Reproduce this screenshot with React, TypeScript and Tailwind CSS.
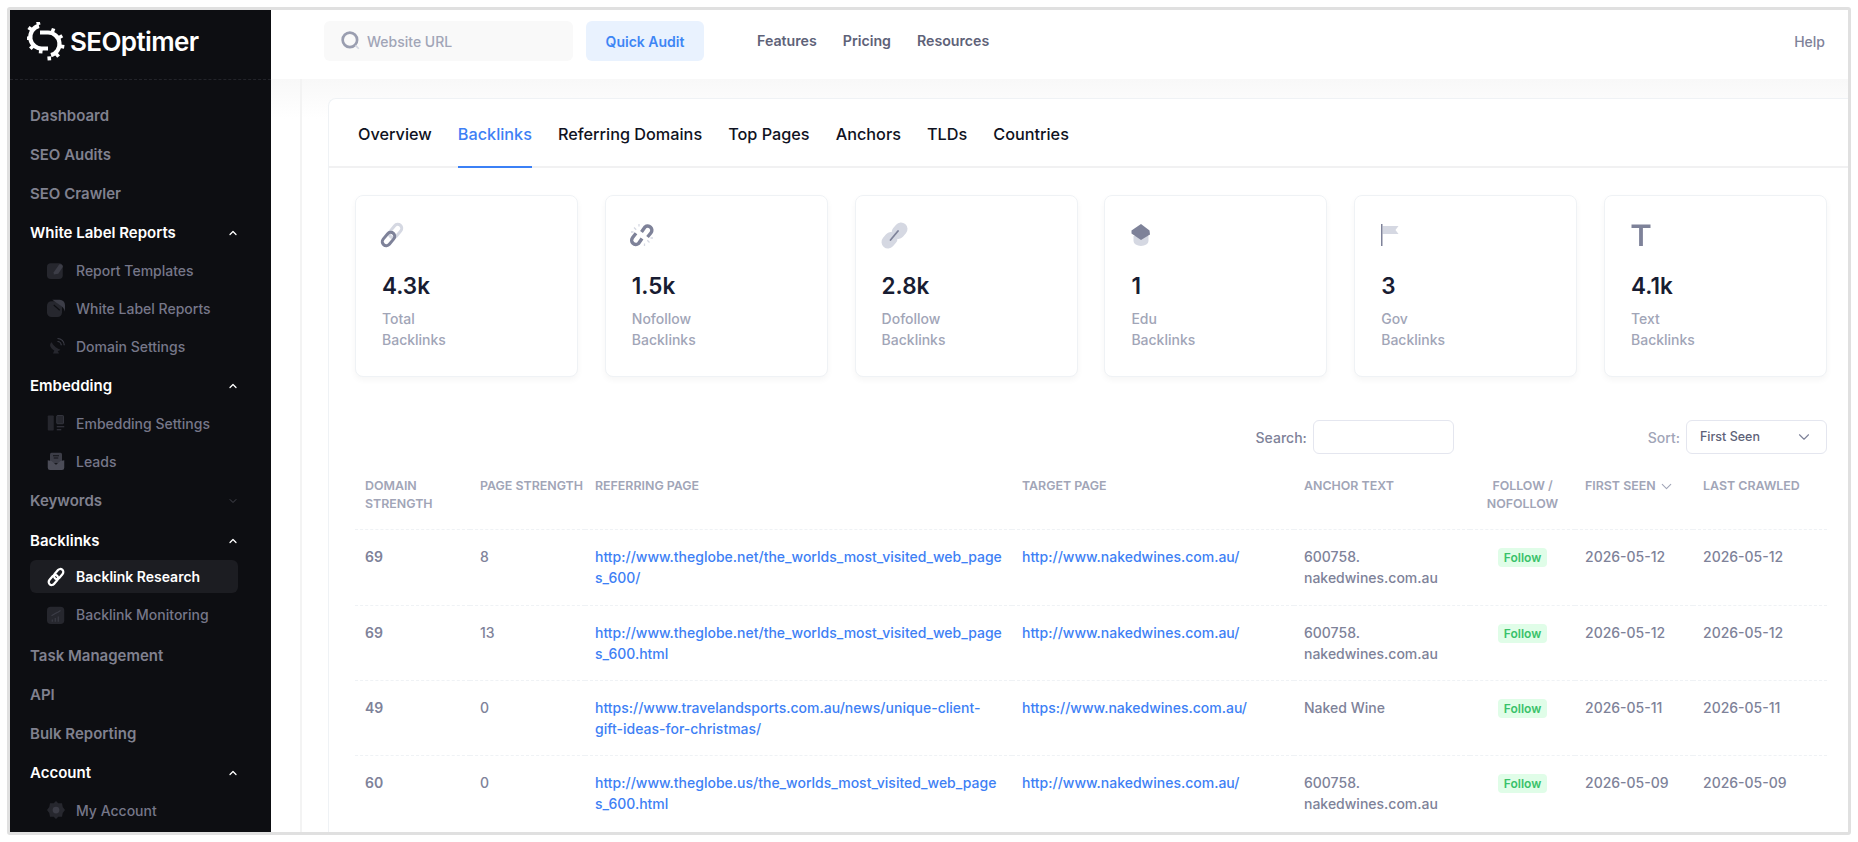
import { ChevronDown, ChevronUp } from 'lucide-react';
import type { ReactNode } from 'react';

const Teeth = ({ cx, cy, r, angles }: { cx: number; cy: number; r: number; angles: number[] }) => (
  <>
    {angles.map((a) => (
      <rect key={a} x={cx + r + 1} y={cy - 1.8} width="4" height="3.6" fill="#fff" transform={`rotate(${a} ${cx} ${cy})`} />
    ))}
  </>
);

const Logo = () => (
  <svg width="38" height="40" viewBox="0 0 38 40" fill="none" className="shrink-0">
    <path d="M12 3.900A11.500 11.500 0 0 0 16 26.500H21" stroke="#fff" strokeWidth="4.200" />
    <path d="M13 10.500H21A11.500 11.500 0 0 1 24 33.100" stroke="#fff" strokeWidth="4.200" />
    <Teeth cx={15} cy={15} r={11.5} angles={[255, 215, 175, 135, 95]} />
    <Teeth cx={21} cy={22} r={11.5} angles={[-70, -30, 10, 50, 85]} />
  </svg>
);

// duotone icons, 24 box. a = strong tone, b = soft tone
type Tone = { a: string; b: string };

const LinkIcon = ({ a, b }: Tone) => (
  <>
    <rect x="11.500" y="0.500" width="8" height="15" rx="4" transform="rotate(40 15.500 8)" stroke={b} strokeWidth="3" fill="none" />
    <rect x="4.500" y="8.500" width="8" height="15" rx="4" transform="rotate(40 8.500 16)" stroke={a} strokeWidth="3" fill="none" />
  </>
);
const BrokenLinkIcon = ({ a, b }: Tone) => (
  <>
    <path d="M11.500 9L15 4a4.200 4.200 0 0 1 6 5.800l-3.500 4.200" stroke={a} strokeWidth="3.400" fill="none" />
    <path d="M12 15.500L8.500 20.500a4.200 4.200 0 0 1-6-5.800l3.500-4.500" stroke={a} strokeWidth="3.400" fill="none" />
    <path d="M4 4.500l2.200 2.200M9 1v2.500M1 9h2.500M19.500 19.500l-2.200-2.200M14.500 23v-2.500M23 15h-2.500" stroke={b} strokeWidth="1.300" />
  </>
);
const DofollowIcon = ({ a, b }: Tone) => (
  <>
    <line x1="8" y1="19" x2="11" y2="15.500" stroke={b} strokeWidth="13" strokeLinecap="round" />
    <line x1="18" y1="9.500" x2="21" y2="6" stroke={b} strokeWidth="13" strokeLinecap="round" />
    <line x1="10.500" y1="17" x2="18" y2="8" stroke={a} strokeWidth="1.800" strokeLinecap="round" />
  </>
);
const EduIcon = ({ a, b }: Tone) => (
  <>
    <path d="M4.500 13h15v5a7.500 5 0 0 1-15 0z" fill={b} />
    <path d="M12 1l8.500 6.500 .5 4-9 5.500-9.500-6.500V7.500z" fill={a} strokeLinejoin="round" />
  </>
);
const FlagIcon = ({ a, b }: Tone) => (
  <>
    <path d="M3.500 3h16l-3 4 3 4h-16z" fill={b} />
    <rect x="2" y="1" width="1.500" height="22" fill={a} />
  </>
);
const TextIcon = ({ a }: Tone) => (
  <path d="M2.500 1.500h19v3.500h-7.600v18h-3.800V5H2.500z" fill={a} />
);

const Icon = ({ children, size = 24, className = '' }: { children: ReactNode; size?: number; className?: string }) => (
  <svg width={size} height={size} viewBox="0 0 24 24" className={`shrink-0 overflow-visible ${className}`}>
    {children}
  </svg>
);

const side = { a: '#3c3d47', b: '#26272e' };

const navIcons: Record<string, ReactNode> = {
  template: (
    <>
      <rect x="0" y="3" width="21" height="21" rx="5" fill={side.b} />
      <path d="M9 15l7-10c2-2 6 1 5 3l-6 9-6 1z" fill={side.a} />
    </>
  ),
  report: (
    <>
      <rect x="0" y="3" width="20" height="21" rx="6" fill={side.b} />
      <path d="M7 1h10a7 7 0 0 1 7 7v9a14 14 0 0 0-7-9z" fill={side.a} />
      <path d="M9 8l8 7" stroke="#0d0e12" strokeWidth="1.500" />
    </>
  ),
  domain: (
    <>
      <path d="M6 7c3 5 8 9 12 10-3 3-8 2-11-1s-4-6-1-9z" fill={side.b} />
      <path d="M8 22l3-7 3 3 2 4z" fill={side.b} />
      <path d="M14 6a5 5 0 0 1 5 5M14 2a9 9 0 0 1 9 9" stroke={side.a} strokeWidth="1.500" fill="none" />
    </>
  ),
  embed: (
    <>
      <rect x="1" y="2" width="8" height="20" rx="1" fill={side.b} />
      <rect x="13" y="2" width="9" height="11" rx="1" fill={side.b} stroke={side.a} />
      <path d="M13 17h10M13 21h6" stroke={side.a} strokeWidth="1.500" />
    </>
  ),
  leads: (
    <>
      <rect x="4" y="1" width="16" height="14" rx="2" fill={side.a} />
      <path d="M1 11l5 1 6 5 6-5 5-1v10a3 3 0 0 1-3 3H4a3 3 0 0 1-3-3z" fill="#4b4c57" />
      <path d="M8 5h8M9 8h6" stroke="#0d0e12" strokeWidth="1.200" />
    </>
  ),
  monitor: (
    <>
      <rect x="0" y="1" width="23" height="23" rx="5" fill={side.b} />
      <path d="M6 13l5-3 4-2 3-2" stroke={side.a} strokeWidth="1.500" fill="none" />
      <path d="M7 21v-3M11 21v-5M15 21v-7" stroke={side.a} strokeWidth="1.500" />
    </>
  ),
  account: (
    <>
      <path d="M12 0l3 3h5l1 5 3 4-3 4-1 5h-5l-3 3-3-3H4l-1-5-3-4 3-4 1-5h5z" fill={side.b} />
      <circle cx="12" cy="12" r="4.500" fill={side.a} />
    </>
  ),
};

const Top = ({ label, open, chevron, className = '' }: { label: string; open?: boolean; chevron?: boolean; className?: string }) => (
  <div className={`flex h-[39px] items-center justify-between pr-[32px] pl-[20px] text-[15px] font-semibold ${open ? 'text-white' : 'text-[#80818f]'} ${className}`}>
    <span>{label}</span>
    {chevron &&
      (open ? (
        <ChevronUp size={12} strokeWidth={2.500} className="text-white" />
      ) : (
        <ChevronDown size={12} strokeWidth={2} className="text-[#45464f]" />
      ))}
  </div>
);

const Sub = ({ label, icon, active }: { label: string; icon: ReactNode; active?: boolean }) => (
  <div className="flex h-[38px] items-center pr-[33px] pl-[20px]">
    <div className={`flex h-[33px] w-full items-center gap-[11px] rounded-md pl-[17px] text-[14px] ${active ? 'bg-[#1c1d22] font-semibold text-white' : 'font-medium text-[#767789]'}`}>
      <Icon size={18}>{icon}</Icon>
      <span className="whitespace-nowrap">{label}</span>
    </div>
  </div>
);

const SubGroup = ({ children, className = '-mt-[1.500px] mb-[1.500px]' }: { children: ReactNode; className?: string }) => (
  <div className={className}>{children}</div>
);

const Sidebar = () => (
  <aside className="flex h-full w-[261px] shrink-0 flex-col bg-[#0d0e12]">
    <div className="flex h-[70px] shrink-0 items-center gap-[5px] border-b border-dashed border-[#23242a] pb-[6px] pl-[17px]">
      <Logo />
      <span className="text-[26px] font-semibold tracking-[-0.6px] text-white">SEOptimer</span>
    </div>
    <nav className="pt-[16.500px]">
      <Top label="Dashboard" />
      <Top label="SEO Audits" />
      <Top label="SEO Crawler" />
      <Top label="White Label Reports" open chevron />
      <SubGroup>
        <Sub label="Report Templates" icon={navIcons.template} />
        <Sub label="White Label Reports" icon={navIcons.report} />
        <Sub label="Domain Settings" icon={navIcons.domain} />
      </SubGroup>
      <Top label="Embedding" open chevron />
      <SubGroup>
        <Sub label="Embedding Settings" icon={navIcons.embed} />
        <Sub label="Leads" icon={navIcons.leads} />
      </SubGroup>
      <Top label="Keywords" chevron />
      <Top label="Backlinks" open chevron className="mt-[1px]" />
      <SubGroup className="-mt-[3px] mb-[3px]">
        <Sub label="Backlink Research" icon={<LinkIcon a="#fff" b="#fff" />} active />
        <Sub label="Backlink Monitoring" icon={navIcons.monitor} />
      </SubGroup>
      <Top label="Task Management" />
      <Top label="API" />
      <Top label="Bulk Reporting" />
      <Top label="Account" open chevron />
      <SubGroup>
        <Sub label="My Account" icon={navIcons.account} />
      </SubGroup>
    </nav>
  </aside>
);

const Header = () => (
  <header className="flex h-[69px] shrink-0 items-center bg-white pr-[23px] pb-[7px] pl-[53px] text-[14px]">
    <div className="flex h-10 w-[249px] items-center gap-[6px] rounded-md bg-[#f9f9f9] pl-[17px] font-medium text-[#a1a5b7]">
      <svg width="20" height="20" viewBox="0 0 18 18" fill="none" className="shrink-0">
        <circle cx="8" cy="8" r="6.500" stroke="#9a9eb0" strokeWidth="2.400" />
        <path d="M13 13l3 3" stroke="#d5d8e2" strokeWidth="1.500" />
      </svg>
      Website URL
    </div>
    <div className="ml-[13px] flex h-10 w-[118px] items-center justify-center rounded-md bg-[#e9f2fe] font-semibold text-[#3e86f5]">
      Quick Audit
    </div>
    <div className="ml-[53px] flex gap-[26px] text-[14.200px] font-semibold text-[#5e6278]">
      <span>Features</span>
      <span>Pricing</span>
      <span>Resources</span>
    </div>
    <span className="ml-auto font-medium text-[#7e8299]">Help</span>
  </header>
);

const tabs = ['Overview', 'Backlinks', 'Referring Domains', 'Top Pages', 'Anchors', 'TLDs', 'Countries'];

const stats = [
  { value: '4.3k', label: 'Total', Glyph: LinkIcon },
  { value: '1.5k', label: 'Nofollow', Glyph: BrokenLinkIcon },
  { value: '2.8k', label: 'Dofollow', Glyph: DofollowIcon },
  { value: '1', label: 'Edu', Glyph: EduIcon },
  { value: '3', label: 'Gov', Glyph: FlagIcon },
  { value: '4.1k', label: 'Text', Glyph: TextIcon },
];

const rows = [
  { ds: 69, ps: 8, ref: 'http://www.theglobe.net/the_worlds_most_visited_web_pages_600/', target: 'http://www.nakedwines.com.au/', anchor: ['600758.', 'nakedwines.com.au'], first: '2026-05-12', last: '2026-05-12' },
  { ds: 69, ps: 13, ref: 'http://www.theglobe.net/the_worlds_most_visited_web_pages_600.html', target: 'http://www.nakedwines.com.au/', anchor: ['600758.', 'nakedwines.com.au'], first: '2026-05-12', last: '2026-05-12' },
  { ds: 49, ps: 0, ref: 'https://www.travelandsports.com.au/news/unique-client-gift-ideas-for-christmas/', target: 'https://www.nakedwines.com.au/', anchor: ['Naked Wine'], first: '2026-05-11', last: '2026-05-11' },
  { ds: 60, ps: 0, ref: 'http://www.theglobe.us/the_worlds_most_visited_web_pages_600.html', target: 'http://www.nakedwines.com.au/', anchor: ['600758.', 'nakedwines.com.au'], first: '2026-05-09', last: '2026-05-09' },
];

const Th = ({ children, className = '' }: { children: ReactNode; className?: string }) => (
  <th className={`px-[10px] pt-[16px] pb-[16px] text-left align-top text-[12.400px] leading-[18px] font-semibold text-[#a1a5b7] uppercase ${className}`}>
    {children}
  </th>
);

const BacklinksTable = () => (
  <table className="mt-[7px] w-[1472px] table-fixed border-collapse">
    <colgroup>
      <col className="w-[115px]" />
      <col className="w-[115px]" />
      <col className="w-[427px]" />
      <col className="w-[282px]" />
      <col className="w-[176px]" />
      <col className="w-[105px]" />
      <col className="w-[118px]" />
      <col className="w-[134px]" />
    </colgroup>
    <thead>
      <tr className="border-b border-dashed border-[#eff2f5]">
        <Th>Domain Strength</Th>
        <Th className="whitespace-nowrap">Page Strength</Th>
        <Th>Referring Page</Th>
        <Th>Target Page</Th>
        <Th>Anchor Text</Th>
        <Th className="!text-center">
          Follow /<br />
          Nofollow
        </Th>
        <Th>
          <span className="inline-flex items-center gap-[2px] whitespace-nowrap">
            First Seen
            <ChevronDown size={17} strokeWidth={1.500} />
          </span>
        </Th>
        <Th className="whitespace-nowrap">Last Crawled</Th>
      </tr>
    </thead>
    <tbody className="text-[14px] leading-[21px] font-medium text-[#7e8299]">
      {rows.map((r, i) => (
        <tr key={i} className="h-[75px] border-b border-dashed border-[#eff2f5] first:h-[76px] last:border-b-0">
          <td className="px-[10px] py-[16px] align-top font-semibold">{r.ds}</td>
          <td className="px-[10px] py-[16px] align-top">{r.ps}</td>
          <td className="px-[10px] py-[16px] align-top text-[#3e7ff5] [overflow-wrap:anywhere]">{r.ref}</td>
          <td className="px-[10px] py-[16px] align-top text-[#3e7ff5]">{r.target}</td>
          <td className="px-[10px] py-[16px] align-top">
            {r.anchor.map((line) => (
              <div key={line}>{line}</div>
            ))}
          </td>
          <td className="px-[10px] pt-[18px] align-top">
            <div className="flex justify-center">
              <span className="rounded bg-[#e0fde8] px-[6px] py-[1px] text-[12px] leading-[17px] font-semibold text-[#3ac26a]">
                Follow
              </span>
            </div>
          </td>
          <td className="px-[10px] py-[16px] align-top">{r.first}</td>
          <td className="px-[10px] py-[16px] align-top">{r.last}</td>
        </tr>
      ))}
    </tbody>
  </table>
);

export default function App() {
  return (
    <div className="h-[842px] w-full overflow-hidden bg-white p-[7px] font-['Inter','Noto_Sans',sans-serif]">
      <div className="flex h-[828px] w-[1844px] overflow-hidden rounded-[3px] border-[3px] border-[#e0e0e0] bg-white">
        <Sidebar />
        <div className="flex h-full min-w-0 flex-1 flex-col">
          <Header />
          <main className="flex min-h-0 flex-1 bg-gradient-to-b from-[#f8f8f8] to-white to-[40px]">
            <div className="w-[31px] shrink-0 border-r-2 border-[#f3f3f3]" />
            <div className="min-w-0 flex-1 pt-[19px] pl-[26px]">
              <div className="h-full overflow-hidden rounded-tl-lg border-t border-l border-[#eff2f5] bg-white pl-[26px]">
                <div className="-ml-[26px] flex h-[69px] gap-[26px] border-b-2 border-[#f1f1f2] pt-[4px] pl-[29px] text-[16.250px] font-medium text-[#0f1222]">
                  {tabs.map((t) => (
                    <span
                      key={t}
                      className={`-mb-[2px] flex items-center border-b-2 ${t === 'Backlinks' ? 'border-[#3b80f6] text-[#3e7ff5]' : 'border-transparent'}`}
                    >
                      {t}
                    </span>
                  ))}
                </div>
                <div className="mt-[27px] flex w-[1472px] justify-between">
                  {stats.map(({ value, label, Glyph }) => (
                    <div key={label} className="h-[182px] w-[223px] rounded-lg border border-[#eff2f5] bg-white pt-[27px] pl-[26px] shadow-[0_3px_6px_rgba(0,0,0,0.04)]">
                      <Icon className="-ml-[2px]">
                        <Glyph a="#7e8299" b="#d5d8e2" />
                      </Icon>
                      <div className="mt-[23px] text-[22.500px] leading-[32px] font-semibold text-[#181c32]">{value}</div>
                      <div className="mt-[6px] text-[14px] leading-[21px] font-medium text-[#a1a5b7]">
                        {label}
                        <br />
                        Backlinks
                      </div>
                    </div>
                  ))}
                </div>
                <div className="mt-[43px] flex w-[1472px] items-center justify-end text-[14px] font-medium">
                  <span className="text-[#7e8299]">Search:</span>
                  <div className="ml-[6px] h-[34px] w-[141px] rounded-md border border-[#e4e6ef] bg-white" />
                  <span className="ml-[194px] text-[#a1a5b7]">Sort:</span>
                  <div className="ml-[6px] flex h-[34px] w-[141px] items-center justify-between rounded-md border border-[#e4e6ef] bg-white pr-[13px] pl-[13px] text-[12.500px] text-[#5e6278]">
                    First Seen
                    <ChevronDown size={18} strokeWidth={1.500} className="text-[#7e8299]" />
                  </div>
                </div>
                <BacklinksTable />
              </div>
            </div>
          </main>
        </div>
      </div>
    </div>
  );
}
